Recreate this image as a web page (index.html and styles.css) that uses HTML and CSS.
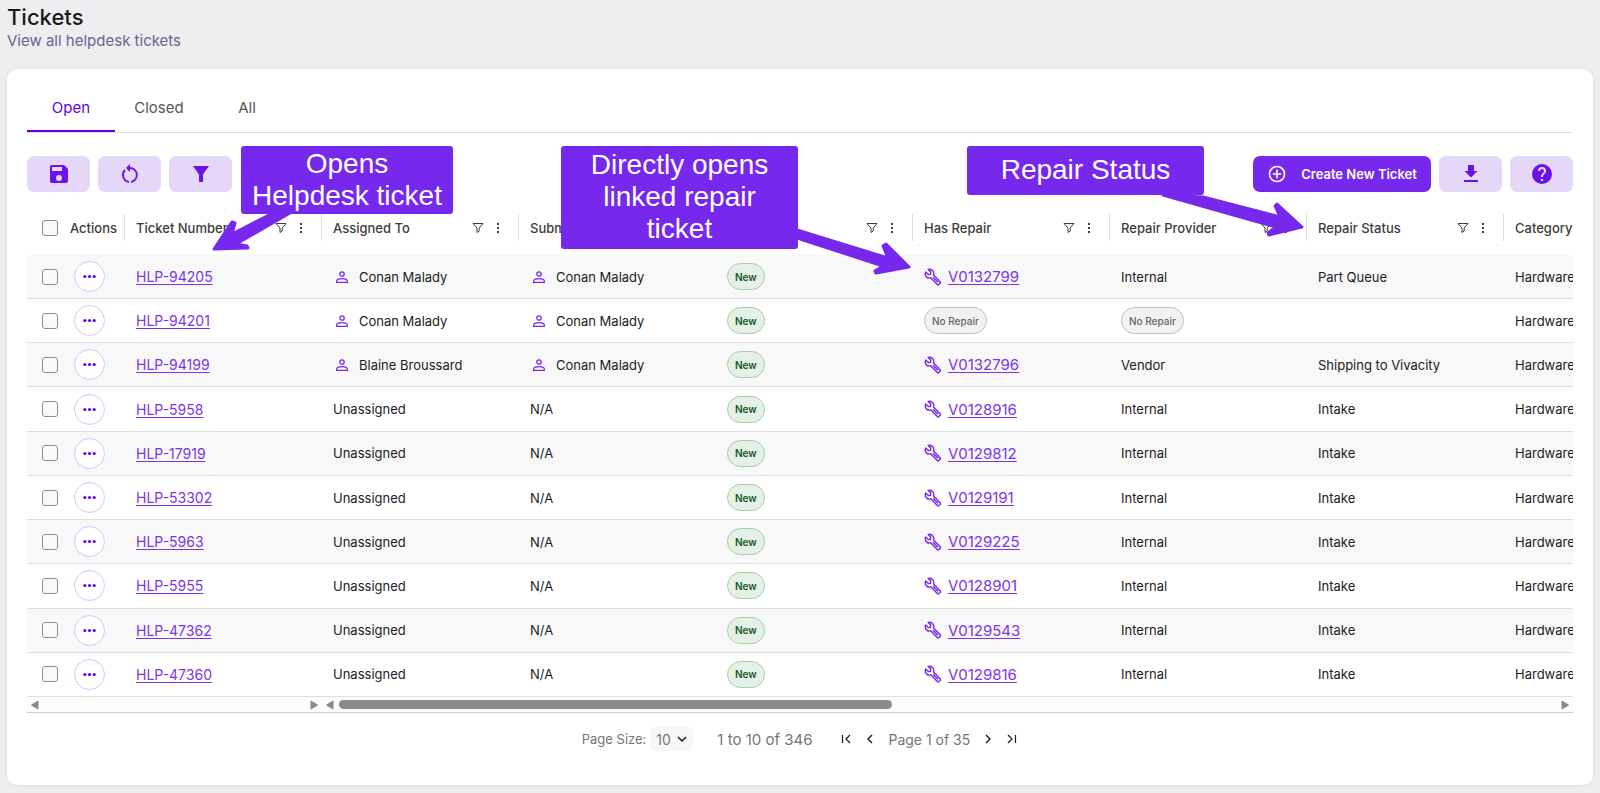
FILE: index.html
```html
<!DOCTYPE html>
<html lang="en">
<head>
    <meta charset="UTF-8">
    <meta name="viewport" content="width=device-width, initial-scale=1.0">
    <title>Tickets</title>
    <link rel="stylesheet" href="styles.css">
</head>
<body>
    <svg class="sprite" aria-hidden="true">
        <symbol id="i-save" viewBox="0 0 24 24"><path d="M17 3H5a2 2 0 0 0-2 2v14a2 2 0 0 0 2 2h14a2 2 0 0 0 2-2V7zm-5 16a3 3 0 1 1 0-6 3 3 0 0 1 0 6zm3-10H5V5h10z"/></symbol>
        <symbol id="i-reset" viewBox="0 0 24 24"><path d="M12 5V2L8 6l4 4V7a6 6 0 0 1 1 11.900v2A8 8 0 0 0 12 5zM6 13c0-1.650.670-3.150 1.760-4.240L6.340 7.340A8 8 0 0 0 11 20.930v-2.020A6 6 0 0 1 6 13z"/></symbol>
        <symbol id="i-filter" viewBox="0 0 24 24"><path d="M4 4h16l-6 8.500V20h-4v-7.500z"/></symbol>
        <symbol id="i-plus" viewBox="0 0 24 24"><path d="M13 7h-2v4H7v2h4v4h2v-4h4v-2h-4zm-1-5a10 10 0 1 0 0 20 10 10 0 0 0 0-20zm0 18a8 8 0 1 1 0-16 8 8 0 0 1 0 16z"/></symbol>
        <symbol id="i-download" viewBox="0 0 24 24"><path d="M18.500 9H15V3H9v6H5.500l6.500 6.500zM5 18v2h14v-2z"/></symbol>
        <symbol id="i-help" viewBox="0 0 24 24"><path d="M12 2a10 10 0 1 0 0 20 10 10 0 0 0 0-20zm1 17h-2v-2h2zm2.070-7.750-.9.920C13.450 12.900 13 13.500 13 15h-2v-.5c0-1.100.450-2.100 1.170-2.830l1.240-1.260c.370-.36.590-.86.590-1.410a2 2 0 0 0-4 0H8a4 4 0 0 1 8 0c0 .880-.36 1.680-.93 2.250z"/></symbol>
        <symbol id="i-funnel" viewBox="0 0 12 12"><path d="M1 1.500h10L7.200 6v3L5 10.500V6z" fill="none" stroke="currentColor" stroke-linejoin="round"/></symbol>
        <symbol id="i-kebab" viewBox="0 0 12 12"><path d="M5 1h2v2H5zM5 5h2v2H5zM5 9h2v2H5z"/></symbol>
        <symbol id="i-dots" viewBox="0 0 16 16"><circle cx="3" cy="8" r="1.700"/><circle cx="8" cy="8" r="1.700"/><circle cx="13" cy="8" r="1.700"/></symbol>
        <symbol id="i-user" viewBox="0 0 14 14"><g fill="none" stroke="currentColor" stroke-width="1.300"><circle cx="7" cy="4" r="2.200"/><path d="M1.700 12.300v-1.400C1.700 9.300 4.500 8.600 7 8.600s5.300.7 5.300 2.300v1.400z"/></g></symbol>
        <symbol id="i-wrench" viewBox="0 0 18 18"><path d="M4.200 1.500 6.800 4 6.500 6.200 4.300 6.600 1.700 4.100C.9 6 1.300 7.900 2.700 9.100c1.200 1 2.700 1.200 4 .7l6.600 6.700c.5.500 1.100.5 1.600 0l1.200-1.200c.5-.5.5-1.100 0-1.600L9.500 7c.6-1.600.2-3.400-1-4.500-1.200-1-2.800-1.500-4.300-1zM9 9.200l5 5" fill="none" stroke="currentColor" stroke-width="1.400" stroke-linejoin="round"/></symbol>
        <symbol id="i-left" viewBox="0 0 10 10"><path d="M8 1v8L1.500 5z" stroke="currentColor" stroke-linejoin="round"/></symbol>
        <symbol id="i-right" viewBox="0 0 10 10"><path d="M2 1v8l6.500-4z" stroke="currentColor" stroke-linejoin="round"/></symbol>
        <symbol id="i-first" viewBox="0 0 12 12"><path d="M2.500 2v8M10 2 6 6l4 4" fill="none" stroke="currentColor" stroke-width="1.200"/></symbol>
        <symbol id="i-prev" viewBox="0 0 12 12"><path d="M8 2 4 6l4 4" fill="none" stroke="currentColor" stroke-width="1.400"/></symbol>
        <symbol id="i-next" viewBox="0 0 12 12"><path d="m4 2 4 4-4 4" fill="none" stroke="currentColor" stroke-width="1.400"/></symbol>
        <symbol id="i-last" viewBox="0 0 12 12"><path d="M9.500 2v8M2 2l4 4-4 4" fill="none" stroke="currentColor" stroke-width="1.200"/></symbol>
        <symbol id="i-down" viewBox="0 0 12 12"><path d="m2 4 4 4 4-4" fill="none" stroke="currentColor" stroke-width="1.500"/></symbol>
    </svg>

    <header class="page-header">
        <h1>Tickets</h1>
        <p>View all helpdesk tickets</p>
    </header>

    <main class="card">
        <nav class="tabs">
            <button type="button" class="tab active">Open</button>
            <button type="button" class="tab">Closed</button>
            <button type="button" class="tab">All</button>
        </nav>

        <div class="toolbar">
            <button type="button" class="tool" aria-label="Save view"><svg><use href="#i-save"/></svg></button>
            <button type="button" class="tool" aria-label="Reset view"><svg><use href="#i-reset"/></svg></button>
            <button type="button" class="tool" aria-label="Filter"><svg><use href="#i-filter"/></svg></button>
            <button type="button" class="create"><svg><use href="#i-plus"/></svg>Create New Ticket</button>
            <button type="button" class="tool" aria-label="Download"><svg><use href="#i-download"/></svg></button>
            <button type="button" class="tool" aria-label="Help"><svg><use href="#i-help"/></svg></button>
        </div>

        <div class="grid">
            <table>
                <thead>
                    <tr id="head">
                        <th class="col-check"><input type="checkbox" aria-label="Select all"></th>
                        <th class="col-actions">Actions</th>
                    </tr>
                </thead>
                <tbody id="rows"></tbody>
            </table>
        </div>

        <div class="scrollbars">
            <div class="scroll pinned">
                <svg><use href="#i-left"/></svg>
                <svg><use href="#i-right"/></svg>
            </div>
            <div class="scroll">
                <svg><use href="#i-left"/></svg>
                <div class="track"><div class="thumb"></div></div>
                <svg><use href="#i-right"/></svg>
            </div>
        </div>

        <footer class="pager">
            <label for="pageSize">Page Size:</label>
            <span class="size">
                <select id="pageSize">
                    <option>10</option>
                    <option>20</option>
                    <option>50</option>
                </select>
                <svg><use href="#i-down"/></svg>
            </span>
            <span class="range">1 to 10 of 346</span>
            <button type="button" aria-label="First page"><svg><use href="#i-first"/></svg></button>
            <button type="button" aria-label="Previous page"><svg><use href="#i-prev"/></svg></button>
            <span>Page 1 of 35</span>
            <button type="button" aria-label="Next page"><svg><use href="#i-next"/></svg></button>
            <button type="button" aria-label="Last page"><svg><use href="#i-last"/></svg></button>
        </footer>
    </main>

    <!-- notes over the table -->
    <svg class="arrows" aria-hidden="true">
        <path d="M273 213 232 234 235 223 232 222 214 249 248 248 247 246 236 244 290 213z"/>
        <path d="M797 230 888 258 883 246 886 244 909 267 876 273 875 271 883 266 797 238z"/>
        <path d="M1203 197 1280 217 1275 206 1277 204 1302 227 1269 235 1268 233 1276 227 1163 195z"/>
    </svg>
    <div class="note note-ticket">Opens<br>Helpdesk ticket</div>
    <div class="note note-repair">Directly opens<br>linked repair<br>ticket</div>
    <div class="note note-status">Repair Status</div>

    <script src="script.js"></script>
</body>
</html>
```

FILE: styles.css
```css
* {
    box-sizing: border-box;
}

body {
    margin: 0;
    padding: 4px 7px 8px;
    position: relative;
    background: #eeeef1;
    color: #181d1f;
    font-family: Inter, "Liberation Sans", sans-serif;
    font-size: 13px;
    overflow-x: hidden;
}

button,
select {
    font: inherit;
    color: inherit;
    border: none;
    background: none;
    padding: 0;
    cursor: pointer;
}

svg {
    fill: currentColor;
    flex: none;
}

.sprite {
    position: absolute;
    width: 0;
    height: 0;
}

.page-header {
    height: 65px;
}

.page-header h1 {
    margin: 0;
    font-size: 22px;
    font-weight: 500;
    line-height: 27px;
    color: #1a1a1a;
}

.page-header p {
    margin: 0;
    font-size: 15px;
    line-height: 20px;
    color: #6c6391;
}

.card {
    background: #fff;
    border-radius: 10px;
    padding: 15px 20px 32px;
    box-shadow: 0 0 4px rgba(0, 0, 0, 0.08);
}

/* tabs */
.tabs {
    display: flex;
    height: 49px;
    border-bottom: 1px solid #e0e0e0;
}

.tab {
    width: 88px;
    font-size: 15px;
    color: #555;
    border-bottom: 2px solid transparent;
}

.tab.active {
    color: #6200ee;
    border-color: #6200ee;
}

/* toolbar */
.toolbar {
    display: flex;
    gap: 8px;
    padding: 23px 0 15px;
}

.toolbar button {
    display: flex;
    align-items: center;
    justify-content: center;
    height: 36px;
    border-radius: 7px;
}

.tool {
    width: 63px;
    background: #e4d7f8;
    color: #6a11ee;
}

.tool svg {
    width: 24px;
    height: 24px;
}

.create {
    margin-left: auto;
    width: 178px;
    gap: 14px;
    background: #7728ed;
    color: #fff;
    font-weight: 600;
}

.create svg {
    width: 20px;
    height: 20px;
}

/* table */
.grid {
    overflow: hidden;
}

table {
    width: 1673px;
    height: 490px;
    table-layout: fixed;
    border-collapse: collapse;
}

thead tr {
    height: 48px;
}

th,
td {
    padding: 0 0 0 12px;
    text-align: left;
    white-space: nowrap;
}

th {
    width: 197px;
    padding-bottom: 7px;
    font-weight: 500;
    color: #3c3c3c;
}

th.col-check {
    width: 35px;
}

th.col-actions {
    width: 62px;
    padding-left: 8px;
}

td {
    border-bottom: 1px solid #dcdee0;
    color: #181d1f;
}

tbody tr:nth-child(odd) {
    background: #f8f8f8;
}

td:first-child,
th:first-child {
    padding-left: 15px;
}

input[type="checkbox"] {
    appearance: none;
    display: block;
    width: 16px;
    height: 16px;
    margin: 0;
    border: 1px solid #8a8f94;
    border-radius: 3px;
    background: #fafafa;
}

.head-cell {
    display: flex;
    align-items: center;
    gap: 8px;
    height: 27px;
    margin-left: -12px;
    padding: 0 14px 0 11px;
    border-left: 1px solid #dcdee0;
}

.head-cell span {
    flex: 1;
}

.head-cell svg {
    width: 12px;
    height: 12px;
}

.more {
    display: flex;
    align-items: center;
    justify-content: center;
    width: 31px;
    height: 31px;
    border: 1px solid #d8c5fb;
    border-radius: 50%;
    background: #fff;
    color: #6200ee;
}

.more svg {
    width: 15px;
    height: 15px;
}

a {
    color: #7a35ec;
    font-size: 14px;
    text-underline-offset: 2px;
}

.with-icon {
    display: flex;
    align-items: center;
    gap: 6px;
}

.with-icon svg {
    width: 18px;
    height: 18px;
    color: #7728ed;
}

.with-icon a {
    font-size: 15px;
}

.with-icon.user {
    gap: 10px;
    padding-left: 2px;
}

.user svg {
    width: 14px;
    height: 14px;
}

.chip {
    display: inline-flex;
    align-items: center;
    height: 27px;
    padding: 0 7px;
    border: 1px solid #bdbdbd;
    border-radius: 14px;
    background: #f2f2f2;
    color: #666;
    font-size: 10px;
    font-weight: 500;
}

.chip.new {
    border-color: #a3cfa6;
    background: #e5f1e7;
    color: #14591a;
    font-weight: 600;
}

/* scrollbars */
.scrollbars {
    display: flex;
    height: 16px;
    background: #fcfcfc;
    border-bottom: 1px solid #c8cccf;
}

.scroll {
    flex: 1;
    display: flex;
    align-items: center;
    justify-content: space-between;
    padding: 0 3px;
    color: #8a8a8a;
}

.scroll.pinned {
    flex: none;
    width: 295px;
}

.scroll svg {
    width: 10px;
    height: 10px;
}

.track {
    flex: 1;
    margin: 0 4px;
}

.thumb {
    width: 45.4%;
    height: 9px;
    border-radius: 5px;
    background: #8a8a8a;
}

/* pager */
.pager {
    display: flex;
    align-items: center;
    justify-content: center;
    gap: 12px;
    padding: 14px 0 2px;
    color: #757575;
    font-size: 14px;
}

.pager label {
    font-size: 13px;
}

.pager button {
    display: flex;
    color: #181d1f;
}

.pager svg {
    width: 12px;
    height: 12px;
}

.size {
    position: relative;
    margin-left: -8px;
}

.size select {
    appearance: none;
    width: 43px;
    height: 24px;
    padding-left: 6px;
    border-radius: 4px;
    background: #f7f7f7;
}

.size svg {
    position: absolute;
    top: 6px;
    right: 5px;
    color: #181d1f;
    pointer-events: none;
}

.pager .range {
    margin: 0 16px 0 12px;
    font-size: 15px;
}

/* notes */
.arrows {
    position: absolute;
    top: 0;
    left: 0;
    width: 1320px;
    height: 290px;
    color: #7728ed;
    stroke: #7728ed;
    stroke-width: 3px;
    stroke-linejoin: round;
    pointer-events: none;
}

.note {
    position: absolute;
    top: 146px;
    padding: 2px 0;
    border-radius: 3px;
    background: #7728ed;
    color: #fff;
    font-family: "Liberation Sans", sans-serif;
    font-size: 28px;
    line-height: 32px;
    text-align: center;
}

.note-ticket {
    left: 241px;
    width: 212px;
}

.note-repair {
    left: 561px;
    width: 237px;
    padding: 3px 0 4px;
}

.note-status {
    left: 967px;
    width: 237px;
    padding: 8px 0 9px;
}
```

FILE: script.js
```js
const columns = ["Ticket Number", "Assigned To", "Submitted By", "Status", "Has Repair", "Repair Provider", "Repair Status", "Category"];

// ticket, assigned to, submitted by, repair, provider, repair status
const tickets = [
    ["HLP-94205", "Conan Malady", "Conan Malady", "V0132799", "Internal", "Part Queue"],
    ["HLP-94201", "Conan Malady", "Conan Malady", "", "", ""],
    ["HLP-94199", "Blaine Broussard", "Conan Malady", "V0132796", "Vendor", "Shipping to Vivacity"],
    ["HLP-5958", "", "", "V0128916", "Internal", "Intake"],
    ["HLP-17919", "", "", "V0129812", "Internal", "Intake"],
    ["HLP-53302", "", "", "V0129191", "Internal", "Intake"],
    ["HLP-5963", "", "", "V0129225", "Internal", "Intake"],
    ["HLP-5955", "", "", "V0128901", "Internal", "Intake"],
    ["HLP-47362", "", "", "V0129543", "Internal", "Intake"],
    ["HLP-47360", "", "", "V0129816", "Internal", "Intake"]
];

const icon = name => `<svg><use href="#i-${name}"/></svg>`;
const user = name => `<div class="with-icon user">${icon("user")}${name}</div>`;
const noRepair = '<span class="chip">No Repair</span>';

document.getElementById("head").innerHTML += columns.map(name =>
    `<th><div class="head-cell"><span>${name}</span>${icon("funnel")}${icon("kebab")}</div></th>`
).join("");

document.getElementById("rows").innerHTML = tickets.map(([id, assigned, submitted, repair, provider, status]) => `
    <tr>
        <td><input type="checkbox" aria-label="Select ${id}"></td>
        <td><button type="button" class="more" aria-label="Actions for ${id}">${icon("dots")}</button></td>
        <td><a href="#">${id}</a></td>
        <td>${assigned ? user(assigned) : "Unassigned"}</td>
        <td>${submitted ? user(submitted) : "N/A"}</td>
        <td><span class="chip new">New</span></td>
        <td>${repair ? `<div class="with-icon">${icon("wrench")}<a href="#">${repair}</a></div>` : noRepair}</td>
        <td>${provider || noRepair}</td>
        <td>${status}</td>
        <td>Hardware</td>
    </tr>`
).join("");
```
